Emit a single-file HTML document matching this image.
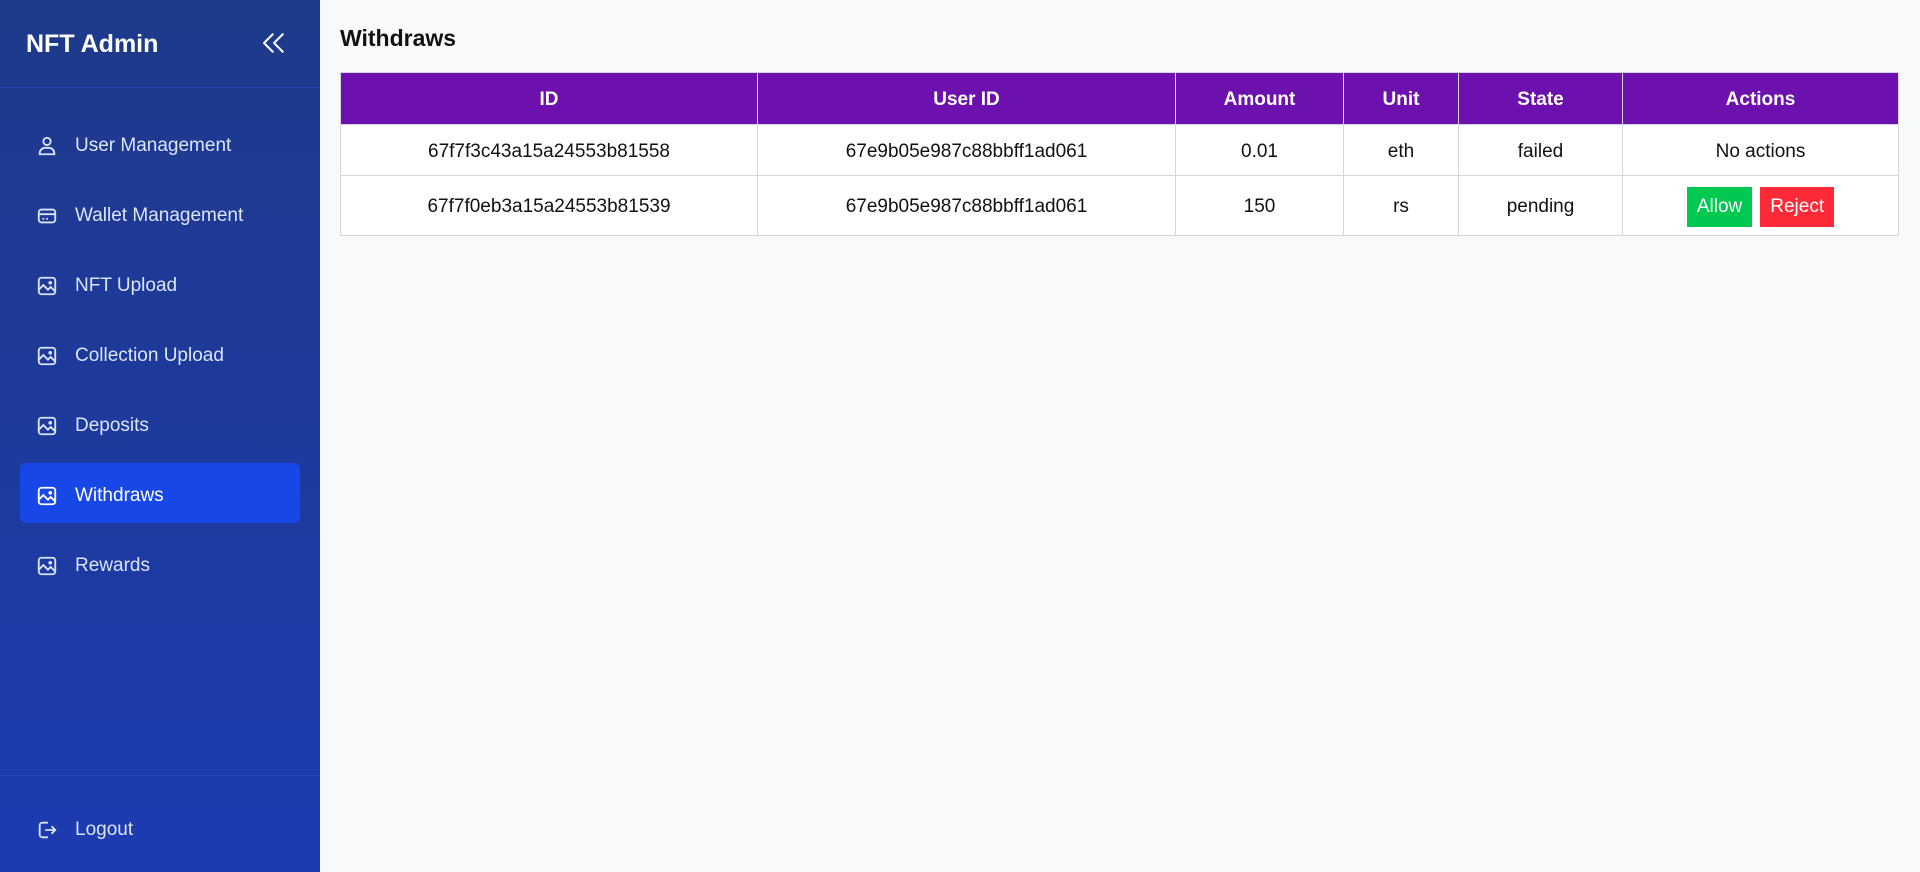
<!DOCTYPE html>
<html><head><style>
*{box-sizing:border-box;margin:0;padding:0}
body{width:1920px;height:872px;overflow:hidden;font-family:"Liberation Sans",sans-serif;background:#f8f9fb;position:relative}
.sb{position:absolute;left:0;top:0;width:320px;height:872px;background:linear-gradient(#1e3a8a,#1c3bb0)}
.brand{position:absolute;left:26px;top:30px;color:#fff;font-weight:bold;font-size:25px}
.chev{position:absolute;left:259px;top:28px}
.div1{position:absolute;left:0;top:87px;width:320px;height:1px;background:#2447b8}
.div2{position:absolute;left:0;top:775px;width:320px;height:1px;background:#2447b8}
.nav{position:absolute;left:20px;width:280px;height:60px;border-radius:6px;color:#dbe4ff;font-size:19px;display:flex;align-items:center;padding-left:55px;padding-top:5px}
.nav.act{background:#1747e6;color:#fff}
.nav svg{position:absolute;left:16px;top:22px}
h1{position:absolute;left:340px;top:25px;font-size:23px;font-weight:bold;color:#111}
table{position:absolute;left:340px;top:72px;width:1559px;border-collapse:collapse;font-size:19px;color:#111}
th{background:#6c11ad;color:#fff;height:52px;border:1px solid #d4d7de;font-weight:bold;padding-top:3px}
td{background:#fff;text-align:center;border:1px solid #d4d7de;height:51px;padding-top:3px}
tr.r2 td{height:60px}
.btn{display:inline-block;color:#fff;padding:0 10px;height:40px;line-height:40px;margin:0 4px}
</style></head><body>
<div class="sb">
<div class="brand">NFT Admin</div>
<svg class="chev" width="30" height="30" viewBox="0 0 24 24" fill="none" stroke="#fff" stroke-width="1.6" stroke-linecap="round" stroke-linejoin="round"><path d="M11 5l-7 7 7 7M19 5l-7 7 7 7"/></svg>
<div class="div1"></div>
<div class="nav" style="top:113px"><svg width="22" height="22" viewBox="0 0 24 24" fill="none" stroke="#dbe4ff" stroke-width="2"><circle cx="12" cy="7" r="4"/><path d="M4 21v-1a6 6 0 0 1 6-6h4a6 6 0 0 1 6 6v1z"/></svg>User Management</div>
<div class="nav" style="top:183px"><svg width="22" height="22" viewBox="0 0 24 24" fill="none" stroke="#dbe4ff" stroke-width="2"><rect x="3" y="5" width="18" height="14" rx="3"/><path d="M3 10h18M7 15h2M11 15h2"/></svg>Wallet Management</div>
<div class="nav" style="top:253px"><svg width="22" height="22" viewBox="0 0 24 24" fill="none" stroke="#dbe4ff" stroke-width="2"><rect x="3" y="3" width="18" height="18" rx="3"/><path d="M3 16l5-5 5 5 3-3 5 5"/><circle cx="15.5" cy="8.5" r="1"/></svg>NFT Upload</div>
<div class="nav" style="top:323px"><svg width="22" height="22" viewBox="0 0 24 24" fill="none" stroke="#dbe4ff" stroke-width="2"><rect x="3" y="3" width="18" height="18" rx="3"/><path d="M3 16l5-5 5 5 3-3 5 5"/><circle cx="15.5" cy="8.5" r="1"/></svg>Collection Upload</div>
<div class="nav" style="top:393px"><svg width="22" height="22" viewBox="0 0 24 24" fill="none" stroke="#dbe4ff" stroke-width="2"><rect x="3" y="3" width="18" height="18" rx="3"/><path d="M3 16l5-5 5 5 3-3 5 5"/><circle cx="15.5" cy="8.5" r="1"/></svg>Deposits</div>
<div class="nav act" style="top:463px"><svg width="22" height="22" viewBox="0 0 24 24" fill="none" stroke="#fff" stroke-width="2"><rect x="3" y="3" width="18" height="18" rx="3"/><path d="M3 16l5-5 5 5 3-3 5 5"/><circle cx="15.5" cy="8.5" r="1"/></svg>Withdraws</div>
<div class="nav" style="top:533px"><svg width="22" height="22" viewBox="0 0 24 24" fill="none" stroke="#dbe4ff" stroke-width="2"><rect x="3" y="3" width="18" height="18" rx="3"/><path d="M3 16l5-5 5 5 3-3 5 5"/><circle cx="15.5" cy="8.5" r="1"/></svg>Rewards</div>
<div class="div2"></div>
<div class="nav" style="top:797px"><svg width="22" height="22" viewBox="0 0 24 24" fill="none" stroke="#dbe4ff" stroke-width="2"><path d="M13 4H7a3 3 0 0 0-3 3v10a3 3 0 0 0 3 3h6M10 12h11M17 8l4 4-4 4"/></svg>Logout</div>
</div>
<h1>Withdraws</h1>
<table>
<tr><th style="width:417px">ID</th><th style="width:418px">User ID</th><th style="width:168px">Amount</th><th style="width:115px">Unit</th><th style="width:164px">State</th><th>Actions</th></tr>
<tr><td>67f7f3c43a15a24553b81558</td><td>67e9b05e987c88bbff1ad061</td><td>0.01</td><td>eth</td><td>failed</td><td>No actions</td></tr>
<tr class="r2"><td>67f7f0eb3a15a24553b81539</td><td>67e9b05e987c88bbff1ad061</td><td>150</td><td>rs</td><td>pending</td><td><span class="btn" style="background:#00c850">Allow</span><span class="btn" style="background:#ff2a37">Reject</span></td></tr>
</table>
</body></html>
